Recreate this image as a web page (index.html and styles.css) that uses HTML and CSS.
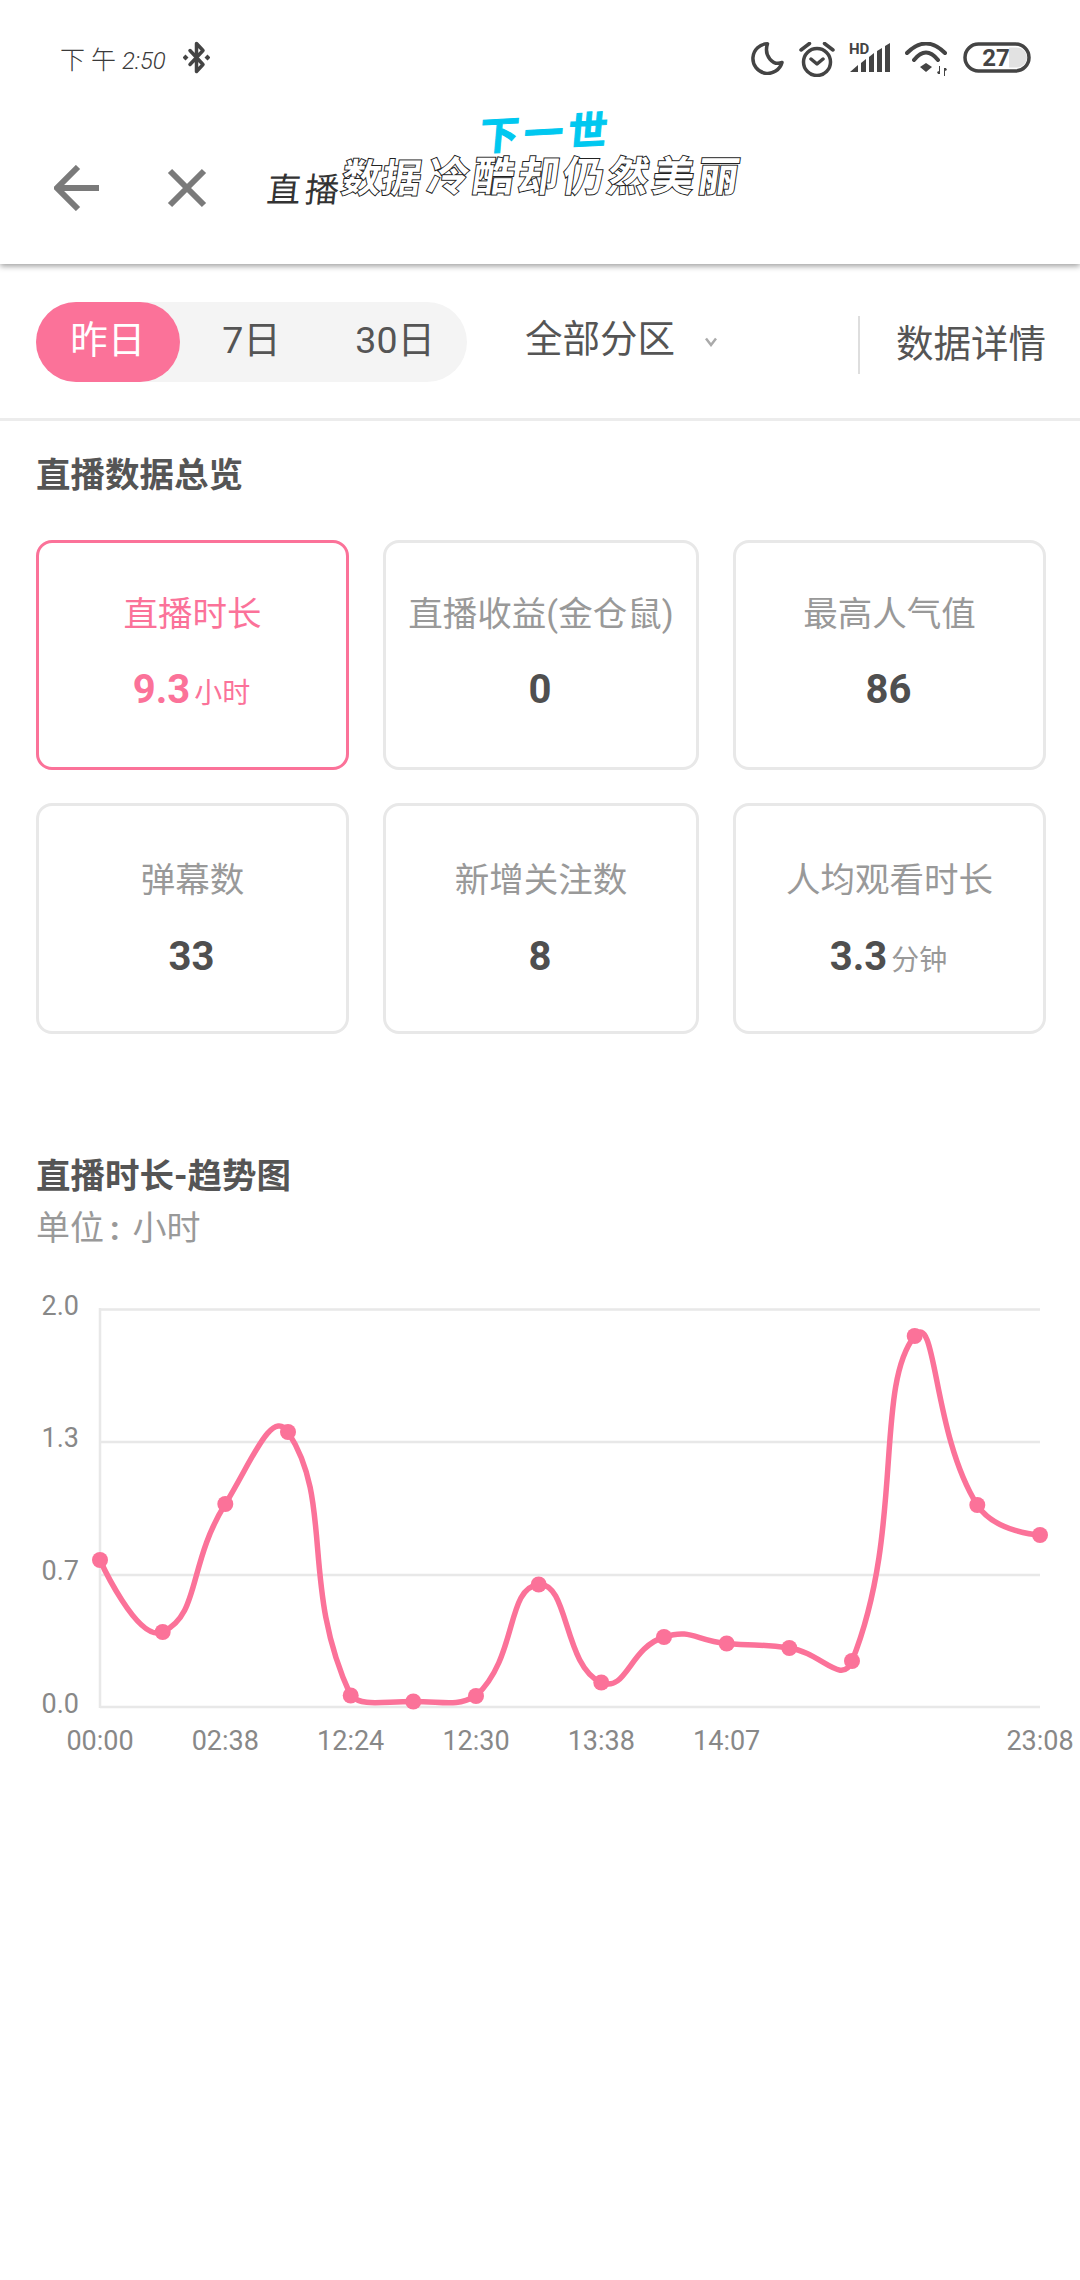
FILE: index.html
```html
<!DOCTYPE html>
<html lang="zh-CN">
<head>
<meta charset="utf-8">
<title>直播数据</title>
<link rel="stylesheet" href="styles.css">
</head>
<body>
<header class="appbar">
  <div class="status">
    <div class="status-left">
      <span class="clock"><span class="clock-cn">下午</span><span class="clock-num">2:50</span></span>
      <svg class="bt" width="27" height="33" viewBox="0 0 27 33"><path class="ic-s" d="M7 9.500 20 23.500 13.500 30.500V2.500L20 9.500 7 23.500"/><path class="ic-f" d="M2.500 13.500 5.500 16.500 2.500 19.500-.5 16.500ZM24.500 13.500 27.500 16.500 24.500 19.500 21.500 16.500Z"/></svg>
    </div>
    <div class="status-right">
      <svg width="34" height="33" viewBox="0 0 34 33"><path class="ic-s" d="M16.500 1.800A14.800 14.800 0 1 0 31 20.500C22 24 12.500 14 16.500 1.800Z"/></svg>
      <svg width="36" height="35" viewBox="0 0 36 35"><circle class="ic-s" cx="18" cy="20" r="13.500"/><path class="ic-s" d="M2 8 10.500 1.500M25.500 1.500 34 8M12 17 18 22 24 17"/></svg>
      <svg class="sig" width="42" height="38" viewBox="0 -6 42 38"><text class="hd" x="0" y="11.500">HD</text><path class="ic-f" d="M1 30 9 23V30ZM12 21l5-4V30H12ZM20 15l5-4V30H20ZM28 9l5-3V30H28ZM36 4l5-3V30H36Z"/></svg>
      <svg width="44" height="36" viewBox="0 0 44 36"><path class="ic-s wifi" d="M2 11Q21-8 40 11M9 18Q21 3 33 18"/><path class="ic-f" d="M15 25 21 21 27 25 21 30ZM35 24v8h-2l-1-2 2-1v-5ZM39 34v-8h2l1 2-2 1v5Z"/></svg>
      <svg width="68" height="32" viewBox="0 0 68 32"><rect class="ic-s" x="2" y="2" width="64" height="27" rx="13.500"/><path class="batt-fill" d="M46 5.500H54A10 10 0 0 1 54 25.500H46Z"/><text class="batt-num" x="33" y="24">27</text></svg>
    </div>
  </div>
  <div class="toolbar">
    <svg class="nav-back" width="46" height="46" viewBox="0 0 46 46"><path class="nav-ic" d="M45 23H4M24 2 3 23 24 44"/></svg>
    <svg class="nav-close" width="40" height="40" viewBox="0 0 40 40"><path class="nav-ic" d="M3 3 37 37M37 3 3 37"/></svg>
    <div class="title">
      <span class="title-plain">直播</span><span class="title-line"><span class="title-outline tight">数据</span><span class="title-outline">冷酷却仍然美丽</span></span>
      <span class="title-top">下一世</span>
    </div>
  </div>
</header>

<section class="filter">
  <div class="seg">
    <span class="seg-item seg-on">昨日</span>
    <span class="seg-item">7日</span>
    <span class="seg-item">30日</span>
  </div>
  <div class="zone">全部分区<svg class="chev" width="14" height="10" viewBox="0 0 14 10"><path d="M2 1.500 7 8 12 1.500"/></svg></div>
  <div class="detail">数据详情</div>
</section>

<section class="overview">
  <h2 class="h">直播数据总览</h2>
  <div class="cards">
    <div class="card card-on"><div class="card-label">直播时长</div><div class="card-val">9.3<span class="unit">小时</span></div></div>
    <div class="card"><div class="card-label">直播收益(金仓鼠)</div><div class="card-val">0</div></div>
    <div class="card"><div class="card-label">最高人气值</div><div class="card-val">86</div></div>
    <div class="card"><div class="card-label">弹幕数</div><div class="card-val">33</div></div>
    <div class="card"><div class="card-label">新增关注数</div><div class="card-val">8</div></div>
    <div class="card"><div class="card-label">人均观看时长</div><div class="card-val">3.3<span class="unit">分钟</span></div></div>
  </div>
</section>

<section class="trend">
  <h2 class="h">直播时长-趋势图</h2>
  <div class="sub">单位<span class="colon">:</span>小时</div>
  <svg class="chart" width="1080" height="480" viewBox="0 1280 1080 480">
    <g class="grid">
      <path d="M100 1309.500H1040M100 1442H1040M100 1575H1040M100 1707H1040M100 1308V1708"/>
    </g>
    <g class="axis">
      <text class="y" x="79" y="1314.500">2.0</text>
      <text class="y" x="79" y="1447">1.3</text>
      <text class="y" x="79" y="1579.500">0.7</text>
      <text class="y" x="79" y="1712.500">0.0</text>
      <text class="x" x="100" y="1749.500">00:00</text>
      <text class="x" x="225.300" y="1749.500">02:38</text>
      <text class="x" x="350.700" y="1749.500">12:24</text>
      <text class="x" x="476" y="1749.500">12:30</text>
      <text class="x" x="601.300" y="1749.500">13:38</text>
      <text class="x" x="726.700" y="1749.500">14:07</text>
      <text class="x" x="1040" y="1749.500">23:08</text>
    </g>
    <path class="curve" id="curve" d=""/>
    <g class="dots" id="dots">
      <circle cx="100" cy="1560" r="8"/>
      <circle cx="162.700" cy="1632" r="8"/>
      <circle cx="225.300" cy="1504" r="8"/>
      <circle cx="288" cy="1432" r="8"/>
      <circle cx="350.700" cy="1695.500" r="8"/>
      <circle cx="413.300" cy="1701.500" r="8"/>
      <circle cx="476" cy="1696" r="8"/>
      <circle cx="538.700" cy="1584.500" r="8"/>
      <circle cx="601.300" cy="1682.500" r="8"/>
      <circle cx="664" cy="1637" r="8"/>
      <circle cx="726.700" cy="1643.500" r="8"/>
      <circle cx="789.300" cy="1648" r="8"/>
      <circle cx="852" cy="1661" r="8"/>
      <circle cx="914.700" cy="1336" r="8"/>
      <circle cx="977.300" cy="1505" r="8"/>
      <circle cx="1040" cy="1535" r="8"/>
    </g>
  </svg>
</section>
<script src="chart.js"></script>
</body>
</html>
```

FILE: styles.css
```css
* { box-sizing: border-box; }
html, body { margin: 0; background: #fff; }
body {
  width: 1080px;
  min-height: 2280px;
  font-family: Roboto, "Noto Sans CJK SC", sans-serif;
  color: #555;
  overflow-x: hidden;
}
.appbar {
  height: 264px;
  background: #fff;
  box-shadow: 0 2px 6px rgba(0, 0, 0, .4);
  position: relative;
}
.status {
  height: 84px;
  display: flex;
  justify-content: space-between;
  align-items: flex-start;
  padding: 41px 49px 0 60px;
}
.status-left { display: flex; align-items: center; height: 33px; }
.status-right { display: flex; align-items: flex-start; gap: 14px; }
.status-right svg { display: block; margin-top: 1px; }
.status-right .sig { margin-top: -5px; }
.clock { font-size: 25px; color: #3a3a3a; font-weight: 300; width: 123px; white-space: nowrap; }
.clock-cn { letter-spacing: 6px; font-weight: 300; }
.clock-num { font-style: italic; font-size: 24px; }
.ic-s { fill: none; stroke: #444; stroke-width: 3.500; stroke-linejoin: round; stroke-linecap: round; }
.wifi { stroke-width: 4; }
.ic-f { fill: #444; }
.hd { font: 700 15px Roboto, sans-serif; fill: #444; }
.batt-fill { fill: #e2e2e2; }
.batt-num { font: 700 24px Roboto, sans-serif; fill: #444; text-anchor: middle; }

.toolbar {
  height: 180px;
  display: flex;
  align-items: center;
  padding: 27px 0 0 54px;
}
.nav-ic { fill: none; stroke: #7a7a7a; stroke-width: 6; }
.nav-back { display: block; margin-right: 67px; }
.nav-close { display: block; margin-right: 60px; }
.title {
  position: relative;
  display: flex;
  align-items: flex-end;
  height: 60px;
  white-space: nowrap;
}
.title-plain {
  font-size: 34px;
  letter-spacing: 4px;
  line-height: 40px;
  color: #333;
  transform: skewX(-6deg);
  display: inline-block;
  margin-bottom: 8px;
}
.title-line { display: inline-flex; align-items: flex-end; margin-left: -1px; margin-bottom: 17px; }
.title-outline {
  display: inline-block;
  font-size: 41px;
  font-weight: 700;
  letter-spacing: 4px;
  line-height: 48px;
  color: #fff;
  -webkit-text-stroke: 2px #222;
  paint-order: stroke fill;
  transform: skewX(-8deg);
}
.tight { font-size: 39px; letter-spacing: 1px; margin-right: 6px; margin-bottom: -2px; }
.title-top {
  position: absolute;
  left: 213px;
  top: -46px;
  font-size: 39px;
  font-weight: 700;
  letter-spacing: 5px;
  line-height: 44px;
  color: #00c8f0;
  -webkit-text-stroke: 1px #00c8f0;
  transform: skewX(-8deg) rotate(-3deg);
}

.filter {
  height: 157px;
  border-bottom: 3px solid #ececec;
  display: flex;
  align-items: flex-start;
  padding: 38px 34px 0 36px;
}
.seg {
  width: 431px;
  height: 80px;
  border-radius: 40px;
  background: #f4f4f4;
  display: grid;
  grid-template-columns: repeat(3, 1fr);
  font-size: 37.500px;
  line-height: 76px;
  text-align: center;
  color: #555;
  flex: none;
}
.seg-item { display: block; }
.seg-on { background: #fb7299; color: #fff; border-radius: 40px; }
.zone {
  margin-left: 58px;
  font-size: 37.500px;
  line-height: 74px;
  color: #555;
  display: flex;
  align-items: center;
  flex: none;
}
.chev { margin: 6px 0 0 29px; }
.chev path { fill: none; stroke: #aaa; stroke-width: 2.500; }
.detail {
  margin-left: auto;
  margin-top: 14px;
  height: 58px;
  border-left: 2px solid #dedede;
  padding-left: 36px;
  font-size: 37.500px;
  line-height: 56px;
  color: #555;
  white-space: nowrap;
}

.overview { padding: 30px 34px 0 36px; }
.h {
  margin: 0;
  font-size: 34.500px;
  line-height: 48px;
  font-weight: 700;
  color: #555;
}
.cards {
  margin-top: 41px;
  display: grid;
  grid-template-columns: 313px 316px 313px;
  grid-template-rows: 230px 231px;
  column-gap: 34px;
  row-gap: 33px;
}
.card {
  border: 3px solid #e8e8e8;
  border-radius: 16px;
  text-align: center;
  padding-top: 47px;
}
.card:nth-child(n+4) { padding-top: 50px; }
.card-on { border-color: #fb7299; color: #fb7299; }
.card-label { font-size: 34.500px; line-height: 48px; color: #999; white-space: nowrap; }
.card-on .card-label { color: #fb7299; }
.card-val { margin-top: 28px; padding-right: 2px; font-size: 40px; line-height: 48px; font-weight: 700; color: #4f4f4f; }
.card:nth-child(n+4) .card-val { margin-top: 29px; }
.card-on .card-val { color: #fb7299; }
.unit { font-size: 28px; font-weight: 400; margin-left: 4px; color: #999; }
.card-on .unit { color: #fb7299; }

.trend { padding: 118px 36px 0; }
.sub { margin-top: 4px; font-size: 34px; line-height: 48px; color: #999; }
.colon { padding: 0 13px 0 6px; font-weight: 700; }
.chart { display: block; margin: 28px 0 0 -36px; }
.grid path { fill: none; stroke: #e8e8e8; stroke-width: 2.500; }
.axis text { font-family: Roboto, sans-serif; font-size: 27px; fill: #888; }
.axis .y { text-anchor: end; }
.axis .x { text-anchor: middle; }
.curve { fill: none; stroke: #fb7299; stroke-width: 5.500; stroke-linejoin: round; }
.dots circle { fill: #fb7299; }
```

FILE: chart.js
```js
// Builds the smoothed trend line through the data points; control points stay above the x axis.
var SMOOTH = 0.5;
var AXIS_Y = 1707;
var pts = Array.prototype.map.call(document.querySelectorAll('#dots circle'), function (c) {
  return [parseFloat(c.getAttribute('cx')), parseFloat(c.getAttribute('cy'))];
});
function clamp(c) {
  return [c[0], Math.min(c[1], AXIS_Y)];
}
function controls(i) {
  var p = pts[i], a = pts[i - 1], b = pts[i + 1];
  if (!a || !b) return [p, p];
  var d0 = Math.hypot(p[0] - a[0], p[1] - a[1]);
  var d1 = Math.hypot(b[0] - p[0], b[1] - p[1]);
  var vx = (b[0] - a[0]) * SMOOTH, vy = (b[1] - a[1]) * SMOOTH;
  var r0 = d0 / (d0 + d1), r1 = d1 / (d0 + d1);
  return [clamp([p[0] - vx * r0, p[1] - vy * r0]), clamp([p[0] + vx * r1, p[1] + vy * r1])];
}
var d = 'M' + pts[0].join(' ');
for (var i = 1; i < pts.length; i++) {
  d += 'C' + controls(i - 1)[1].join(' ') + ' ' + controls(i)[0].join(' ') + ' ' + pts[i].join(' ');
}
document.getElementById('curve').setAttribute('d', d);
```
